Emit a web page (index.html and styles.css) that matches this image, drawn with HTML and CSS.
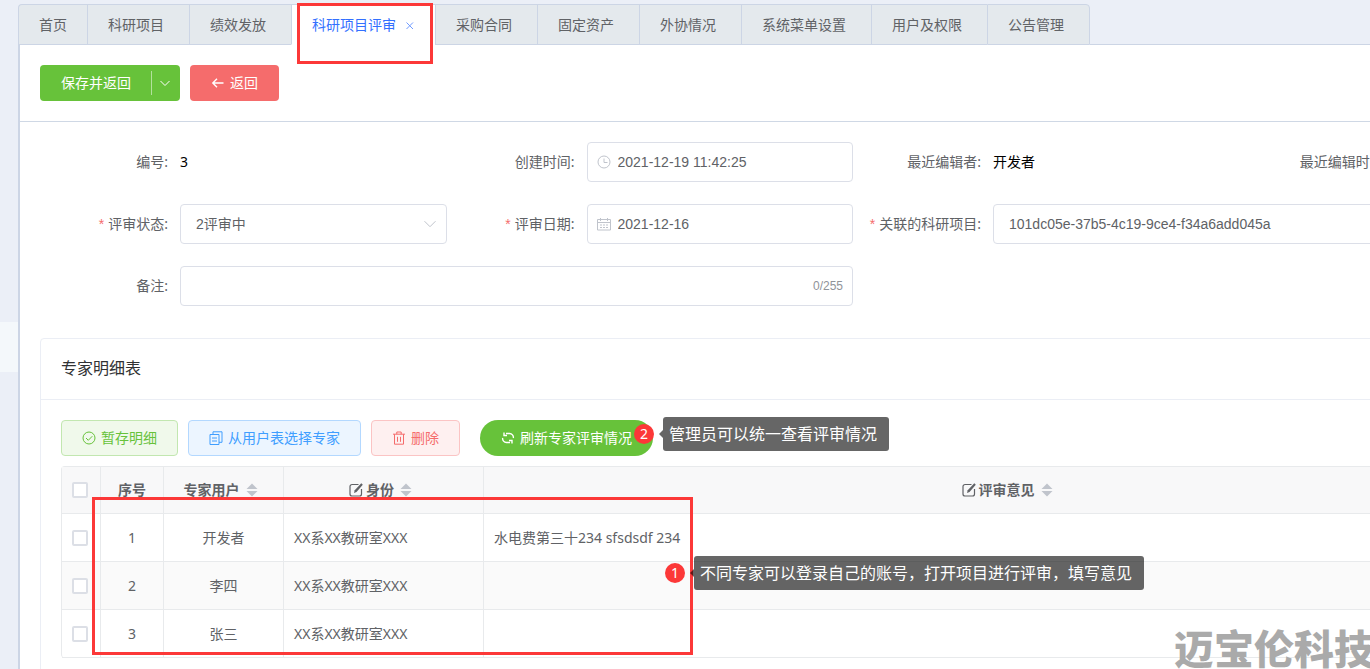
FILE: index.html
```html
<!DOCTYPE html>
<html lang="zh-CN">
<head>
<meta charset="utf-8">
<meta name="viewport" content="width=device-width, initial-scale=1">
<title>科研项目评审</title>
<link rel="stylesheet" href="styles.css">
</head>
<body>
<div class="app">
  <aside class="rail"><div class="rail-handle"></div></aside>
  <div class="workspace">
    <nav class="tabs">
      <div class="tab tab-home"><button type="button">首页</button></div>
      <div class="tab"><button type="button">科研项目</button></div>
      <div class="tab"><button type="button">绩效发放</button></div>
      <div class="tab tab-active">
        <button type="button">科研项目评审</button>
        <button type="button" class="tab-close" aria-label="关闭"><svg class="icon" viewBox="0 0 14 14"><path d="M3.500 4.500l6.500 6.500M10 4.500l-6.500 6.500"/></svg></button>
        <div class="mark mark-tab"></div>
      </div>
      <div class="tab"><button type="button">采购合同</button></div>
      <div class="tab"><button type="button">固定资产</button></div>
      <div class="tab"><button type="button">外协情况</button></div>
      <div class="tab"><button type="button">系统菜单设置</button></div>
      <div class="tab"><button type="button">用户及权限</button></div>
      <div class="tab tab-last"><button type="button">公告管理</button></div>
      <div class="tabs-rest"></div>
    </nav>

    <main class="panel">
      <div class="toolbar">
        <div class="split">
          <button type="button" class="btn btn-save">保存并返回</button>
          <button type="button" class="btn btn-more" aria-label="更多"><svg class="icon" viewBox="0 0 14 14"><path d="M2.500 5l4.500 4.500L11.500 5"/></svg></button>
        </div>
        <button type="button" class="btn btn-back"><svg class="icon icon-bold" viewBox="0 0 14 14"><path d="M12.500 7H2M6 2.800L1.800 7L6 11.200"/></svg>返回</button>
      </div>

      <form class="form">
        <div class="item"><span class="label">编号:</span><span class="value">3</span></div>
        <div class="item">
          <label class="label" for="created">创建时间:</label>
          <div class="field">
            <svg class="icon field-icon" viewBox="0 0 14 14"><circle cx="7" cy="7" r="6"/><path d="M7 3.500V7.500H10.500"/></svg>
            <input id="created" class="input input-date" type="text" value="2021-12-19 11:42:25">
          </div>
        </div>
        <div class="item"><span class="label">最近编辑者:</span><span class="value">开发者</span></div>
        <div class="item"><span class="label">最近编辑时间:</span></div>

        <div class="item">
          <label class="label required" for="status">评审状态:</label>
          <div class="field">
            <select id="status" class="input"><option>2评审中</option></select>
            <svg class="icon select-icon" viewBox="0 0 14 14"><path d="M1.500 4.200L7 9.700L12.500 4.200"/></svg>
          </div>
        </div>
        <div class="item">
          <label class="label required" for="date">评审日期:</label>
          <div class="field">
            <svg class="icon field-icon" viewBox="0 0 14 14"><path d="M.5 2.500h13v10.500H.5zM.5 5.500h13M3.500 1v3M10.500 1v3M3 8h2M6 8h2M9 8h2M3 10.500h2M6 10.500h2M9 10.500h2"/></svg>
            <input id="date" class="input input-date" type="text" value="2021-12-16">
          </div>
        </div>
        <div class="item item-wide">
          <label class="label required" for="project">关联的科研项目:</label>
          <div class="field"><input id="project" class="input" type="text" value="101dc05e-37b5-4c19-9ce4-f34a6add045a"></div>
        </div>

        <div class="item item-wide">
          <label class="label" for="remark">备注:</label>
          <div class="field"><input id="remark" class="input" type="text" maxlength="255"><span class="count">0/255</span></div>
        </div>
      </form>

      <section class="card">
        <h2 class="card-title">专家明细表</h2>
        <div class="card-body">
          <div class="actions">
            <button type="button" class="btn btn-draft"><svg class="icon" viewBox="0 0 14 14"><circle cx="7" cy="7" r="6"/><path d="M4 7l2.300 2.300L10.300 5.200"/></svg>暂存明细</button>
            <button type="button" class="btn btn-pick"><svg class="icon" viewBox="0 0 14 14"><path d="M1 3.500h9v10H1zM4 3.500V.8h9v10.500h-3M3 7h5M3 10h5"/></svg>从用户表选择专家</button>
            <button type="button" class="btn btn-delete"><svg class="icon" viewBox="0 0 14 14"><path d="M1 3.200h12M4.800 3.200V1h4.400v2.200M2.500 3.200v10h9v-10M5.500 5.800v5M8.500 5.800v5"/></svg>删除</button>
            <div class="refresh">
              <button type="button" class="btn btn-refresh"><svg class="icon icon-bold" viewBox="0 0 14 14"><path d="M5 2.500h3.500a3.800 3.800 0 0 1 3.800 4.500M3 1.500v3h3M9 11.500H5.500A3.800 3.800 0 0 1 1.700 7M11 12.500V9.500H8"/></svg>刷新专家评审情况</button>
              <div class="callout callout-refresh"><span class="badge">2</span><span class="bubble">管理员可以统一查看评审情况</span></div>
            </div>
          </div>

          <div class="table-wrap">
            <table class="table">
              <colgroup><col class="c-check"><col class="c-index"><col class="c-user"><col class="c-role"><col><col class="c-end"></colgroup>
              <thead>
                <tr>
                  <th><input type="checkbox" class="check" aria-label="全选"></th>
                  <th>序号</th>
                  <th><div class="head">专家用户<svg class="sort" viewBox="0 0 24 14"><path d="M6.500 6L12 .5L17.500 6zM6.500 8h11L12 13.500z"/></svg></div></th>
                  <th><div class="head"><svg class="edit" viewBox="0 0 14 14"><path d="M9.500 1.500H3a2 2 0 0 0-2 2V11a2 2 0 0 0 2 2h7.500a2 2 0 0 0 2-2V6"/><path class="pen" d="M12.300.3l1.500 1.400L7.500 9L5 10L5.700 7.300z"/></svg>身份<svg class="sort" viewBox="0 0 24 14"><path d="M6.500 6L12 .5L17.500 6zM6.500 8h11L12 13.500z"/></svg></div></th>
                  <th><div class="head"><svg class="edit" viewBox="0 0 14 14"><path d="M9.500 1.500H3a2 2 0 0 0-2 2V11a2 2 0 0 0 2 2h7.500a2 2 0 0 0 2-2V6"/><path class="pen" d="M12.300.3l1.500 1.400L7.500 9L5 10L5.700 7.300z"/></svg>评审意见<svg class="sort" viewBox="0 0 24 14"><path d="M6.500 6L12 .5L17.500 6zM6.500 8h11L12 13.500z"/></svg></div></th>
                  <th class="no-line"></th>
                </tr>
              </thead>
              <tbody>
                <tr><td><input type="checkbox" class="check" aria-label="选择 1"></td><td>1</td><td>开发者</td><td class="left">XX系XX教研室XXX</td><td class="left">水电费第三十234 sfsdsdf 234</td><td class="no-line"></td></tr>
                <tr><td><input type="checkbox" class="check" aria-label="选择 2"></td><td>2</td><td>李四</td><td class="left">XX系XX教研室XXX</td><td></td><td class="no-line"></td></tr>
                <tr><td><input type="checkbox" class="check" aria-label="选择 3"></td><td>3</td><td>张三</td><td class="left">XX系XX教研室XXX</td><td></td><td class="no-line"></td></tr>
              </tbody>
            </table>
            <div class="mark mark-rows"></div>
            <div class="callout callout-rows"><span class="badge">1</span><span class="bubble">不同专家可以登录自己的账号，打开项目进行评审，填写意见</span></div>
          </div>
        </div>
      </section>
    </main>
  </div>
  <div class="watermark">迈宝伦科技</div>
</div>
</body>
</html>
```
FILE: styles.css
```css
* { box-sizing: border-box; }

body {
  margin: 0;
  background: #ebeff7;
  color: #606266;
  font: 14px/20px "Noto Sans", "Noto Sans CJK SC", sans-serif;
}

button, input, select { font: inherit; color: inherit; margin: 0; }
button { cursor: pointer; border: 0; background: none; padding: 0; white-space: nowrap; }

.app {
  position: relative;
  display: grid;
  grid-template-columns: 18px minmax(0, 1fr);
  height: 100vh;
  overflow: hidden;
}

.rail { padding-top: calc(50vh - 13px); }
.rail-handle { height: 50px; background: #f4f8fb; }

.workspace {
  display: flex;
  flex-direction: column;
  padding-top: 4px;
  overflow: hidden;
}

.icon {
  width: 14px;
  height: 14px;
  flex: none;
  fill: none;
  stroke: currentColor;
  stroke-width: 1;
}
.icon-bold { stroke-width: 1.4; }

/* tabs */
.tabs { display: flex; flex: none; height: 41px; }
.tab {
  position: relative;
  display: flex;
  flex: none;
  align-items: center;
  padding: 0 25px 0 20px;
  border: 1px solid #ccd5e5;
  border-right: 0;
  background: #e4e9ed;
}
.tab-home { padding-right: 20px; border-top-left-radius: 4px; }
.tab-last { border-right: 1px solid #ccd5e5; border-top-right-radius: 4px; }
.tab-active {
  padding-right: 18px;
  border-bottom-color: #fff;
  background: #fff;
  color: #3370ff;
}
.tab-close { display: flex; margin-left: 7px; opacity: 0.7; }
.tabs-rest { flex: 1; border-bottom: 1px solid #ccd5e5; }

/* page */
.panel {
  flex: 1;
  border-left: 2px solid #ccd5e5;
  background: #fff;
}
.toolbar {
  display: flex;
  gap: 10px;
  padding: 20px;
  border-bottom: 1px solid #cfd8e5;
}
.btn {
  display: flex;
  align-items: center;
  justify-content: center;
  gap: 5px;
  height: 36px;
  padding: 0 20px;
  border: 1px solid transparent;
  border-radius: 4px;
}
.split { display: flex; border-radius: 4px; background: #67c23a; color: #fff; }
.btn-more { position: relative; padding: 0 7px 0 5px; }
.btn-more::before {
  content: "";
  position: absolute;
  left: -2px;
  top: 5px;
  bottom: 5px;
  width: 1px;
  background: rgba(255, 255, 255, 0.5);
}
.btn-back { background: #f56c6c; color: #fff; }
.btn-draft { background: #f0f9eb; border-color: #c2e7b0; color: #67c23a; }
.btn-pick { background: #ecf5ff; border-color: #b3d8ff; color: #409eff; }
.btn-delete { background: #fef0f0; border-color: #fbc4c4; color: #f56c6c; }
.btn-refresh { border-radius: 18px; background: #67c23a; color: #fff; }

/* form */
.form {
  display: grid;
  grid-template-columns: repeat(4, minmax(0, 1fr));
  row-gap: 22px;
  width: 1666px;
  min-width: 100%;
  padding: 20px 20px 32px;
}
.item { display: grid; grid-template-columns: 140px minmax(0, 1fr); align-items: center; height: 40px; }
.item-wide { grid-column: span 2; }
.label { padding-right: 12px; text-align: right; white-space: nowrap; }
.required::before {
  content: "*";
  margin-right: 4px;
  color: #f56c6c;
  font-family: "Liberation Sans", sans-serif;
}
.value { color: #000; }
.field { position: relative; }
.input {
  display: block;
  width: 100%;
  height: 40px;
  padding: 0 15px;
  border: 1px solid #dcdfe8;
  border-radius: 4px;
  background: #fff;
  font-family: "Liberation Sans", "Noto Sans CJK SC", sans-serif;
  appearance: none;
}
.input-date { padding-left: 30px; }
.field-icon, .select-icon { position: absolute; top: 13px; color: #c0c4cc; }
.field-icon { left: 10px; }
.select-icon { right: 10px; }
.count {
  position: absolute;
  right: 10px;
  top: 10px;
  color: #909399;
  font-family: "Liberation Sans", sans-serif;
  font-size: 12px;
}

/* card */
.card { width: 1626px; min-width: calc(100% - 40px); margin-left: 20px; border: 1px solid #ebeef5; border-radius: 4px; }
.card-title {
  margin: 0;
  padding: 17px 20px 19px;
  border-bottom: 1px solid #ebeef5;
  color: #303133;
  font-size: 16px;
  font-weight: 400;
  line-height: 24px;
}
.card-body { padding: 20px; }
.actions { display: flex; gap: 10px; margin-bottom: 10px; }
.refresh { position: relative; margin-left: 10px; }

/* table */
.table-wrap { position: relative; border: 1px solid #e8eaec; border-bottom: 0; border-radius: 4px; }
.table { width: 100%; table-layout: fixed; border-collapse: separate; border-spacing: 0; }
.c-check { width: 39px; }
.c-index { width: 63px; }
.c-user { width: 120px; }
.c-role { width: 200px; }
.c-end { width: 107px; }
.table th, .table td {
  height: 48px;
  padding: 0;
  border-right: 1px solid #e8eaec;
  border-bottom: 1px solid #e8eaec;
  text-align: center;
  white-space: nowrap;
}
.table th { height: 47px; background: #f8f8f9; font-weight: 700; }
.table tbody tr:nth-child(even) { background: #fafafa; }
.table .no-line { border-right: 0; }
.table .left { padding-left: 10px; text-align: left; }
.head { display: flex; align-items: center; justify-content: center; }
.sort { width: 24px; height: 14px; fill: #c0c4cc; }
.edit { width: 14px; height: 14px; margin-right: 3px; fill: none; stroke: #606266; stroke-width: 1.2; }
.pen { fill: #606266; stroke: none; }
.check {
  display: block;
  width: 16px;
  height: 16px;
  margin-left: 10px;
  border: 2px solid #dcdfe6;
  border-radius: 2px;
  background: #fff;
  appearance: none;
}

/* annotations */
.mark { position: absolute; border: 3px solid #fc3838; pointer-events: none; }
.mark-tab { top: -2px; left: 5px; right: 2px; height: 61px; }
.mark-rows { top: 30px; left: 30px; bottom: 3px; width: 601px; }
.callout { position: absolute; z-index: 1; display: flex; align-items: center; gap: 9px; white-space: nowrap; }
.callout-refresh { left: 154px; top: -3px; }
.callout-rows { left: 603px; top: 89px; }
.badge {
  width: 20px;
  height: 20px;
  border-radius: 50%;
  background: #fc3838;
  color: #fff;
  text-align: center;
}
.bubble {
  position: relative;
  padding: 5px 12px 5px 6px;
  border-radius: 3px;
  background: rgba(0, 0, 0, 0.6);
  color: #fff;
  font-size: 16px;
  line-height: 24px;
}
.bubble::before {
  content: "";
  position: absolute;
  right: 100%;
  top: 13px;
  border: 4px solid transparent;
  border-left: 0;
  border-right-color: rgba(0, 0, 0, 0.6);
}
.watermark {
  position: absolute;
  right: -4px;
  bottom: 0;
  color: #aaa;
  font-size: 40px;
  font-weight: 900;
  line-height: 40px;
}
```
